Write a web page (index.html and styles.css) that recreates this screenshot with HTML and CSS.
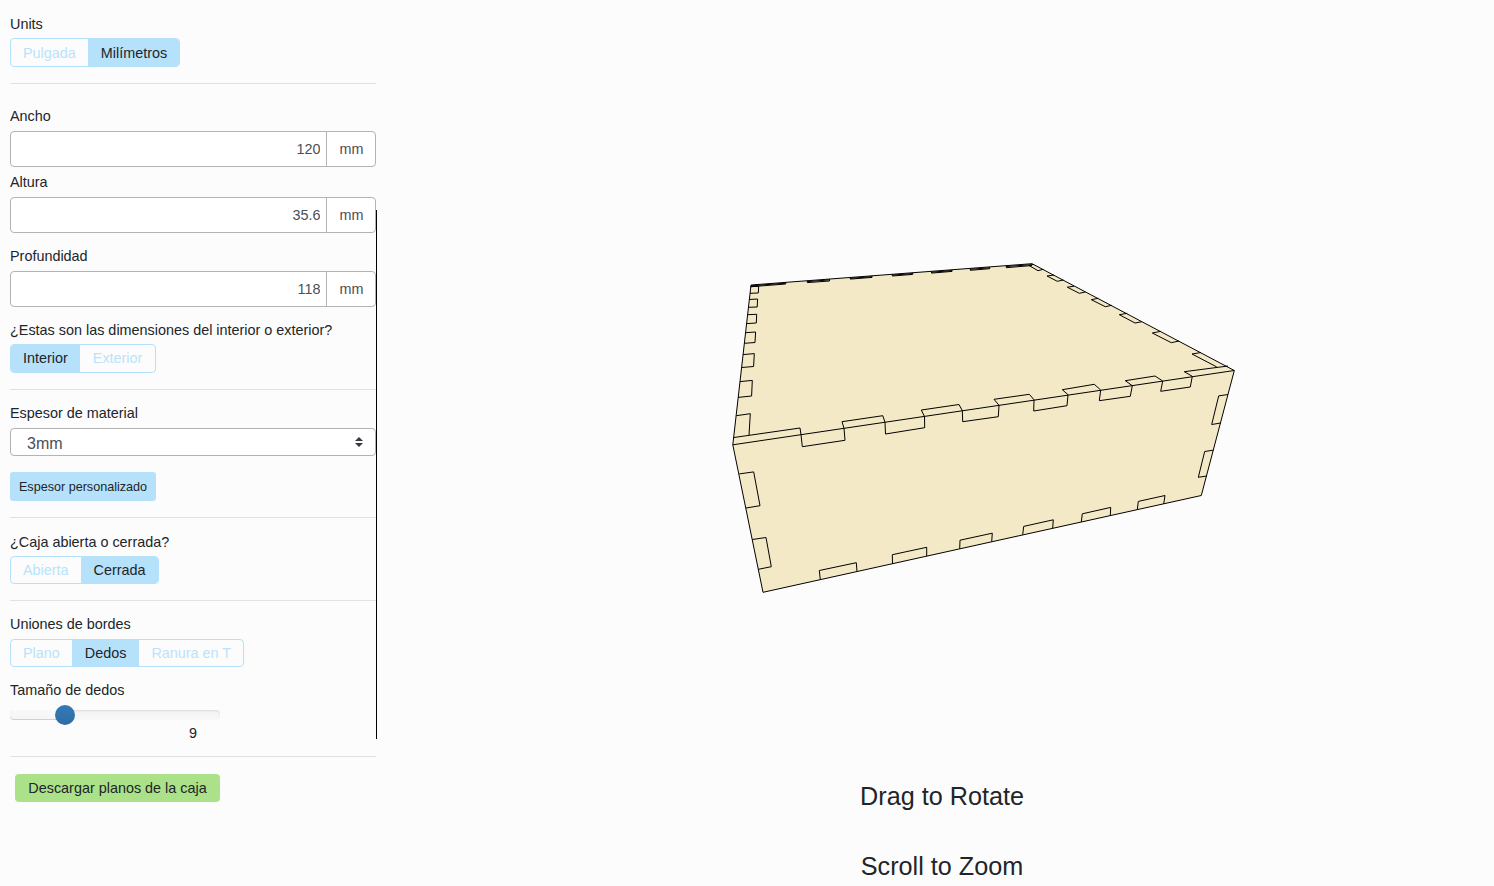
FILE: index.html
```html
<!DOCTYPE html>
<html lang="es">
<head>
<meta charset="utf-8">
<title>Caja</title>
<link rel="stylesheet" href="styles.css">
</head>
<body>
<form class="sidebar">
  <section class="group units">
    <label class="label">Units</label>
    <div class="toggle tall"><span class="option">Pulgada</span><span class="option active">Milímetros</span></div>
  </section>
  <section class="group dimensions">
    <label class="label">Ancho</label>
    <div class="field"><input class="value" value="120"><span class="unit">mm</span></div>
    <label class="label close">Altura</label>
    <div class="field"><input class="value" value="35.6"><span class="unit">mm</span></div>
    <label class="label spaced">Profundidad</label>
    <div class="field"><input class="value" value="118"><span class="unit">mm</span></div>
    <label class="label spaced question">¿Estas son las dimensiones del interior o exterior?</label>
    <div class="toggle tall"><span class="option active">Interior</span><span class="option">Exterior</span></div>
  </section>
  <section class="group material">
    <label class="label">Espesor de material</label>
    <div class="select"><span class="chosen">3mm</span>
      <svg class="caret" viewBox="0 0 8 10"><path d="M4 0 8 4H0zM4 10 0 6h8z"/></svg>
    </div>
    <button type="button" class="custom">Espesor personalizado</button>
  </section>
  <section class="group lid">
    <label class="label">¿Caja abierta o cerrada?</label>
    <div class="toggle"><span class="option">Abierta</span><span class="option active">Cerrada</span></div>
  </section>
  <section class="group joints">
    <label class="label">Uniones de bordes</label>
    <div class="toggle"><span class="option">Plano</span><span class="option active">Dedos</span><span class="option">Ranura en T</span></div>
    <label class="label fingers">Tamaño de dedos</label>
    <div class="slider"><div class="fill"></div><div class="thumb"></div></div>
    <output class="amount">9</output>
  </section>
  <button type="button" class="download">Descargar planos de la caja</button>
</form>
<main class="viewer">
  <svg class="scene" viewBox="377 210 1117 529">
    <path class="face" d="M751 285 1032 263.7 1234.3 370.5 1201.3 495.5 763 592.3 732.8 444.8z"/>
    <path class="edge" d="M732.8 444.8 1234.3 370.5"/>
    <!-- front finger joints -->
    <path class="edge" d="M733.3 437.6 800 428 801 434.7 802.3 446.7 845 440.3 844 428.3 842 421.7 882.8 415.7 885 422.3 885.5 434 924.7 427.7 924.5 416.5 921.3 410 959 404.5 962.3 410.7 962.7 421.7 998.3 416.7 999 405.3 994 399.3 1029.3 394.3 1034 399.7 1033.7 411 1067 405.7 1068 394.7 1062.3 389.7 1094.3 384.3 1100.7 390 1099.3 400.7 1130.3 396.3 1132.3 385.7 1125.3 380.7 1155 376 1162.7 381 1160.7 391.3 1190.3 387 1192.3 376.3 1184.3 371.7 1228 366"/>
    <!-- left joints of the lid -->
    <path class="edge" d="M750.5 286.7 758.7 286.2 758.3 293 750 293.3M749.3 299.5 757.6 299 757.2 307 748.5 307.3M747.5 314.7 756.7 314.3 756.3 323 746.8 323.6M745.5 332.7 755.6 332 755 342.5 744.4 343.3M743 354.6 754.3 353.6 753.6 366.5 741.6 367.5M740 381.6 752.3 380.4 751.6 396 738 397.4M736.3 415.7 750.3 413.7 749 435.3"/>
    <!-- rear joints -->
    <path class="edge" d="M751 286.7 785.7 284V282.4M807.3 280.8V282.6L829.5 281V279.1M850.3 277.5V279.1L872 277.4V275.9M892.3 274.4V276L912.7 274.4V272.8M931.5 271.4V273.1L952 271.4V269.8M970.3 268.5V270.3L989.7 268.7V267M1006.3 265.8V267.7L1032 265.5"/>
    <path class="edge" d="M751 285.8 785.7 283.2M807.3 281.6 829.5 279.9M850.3 278.3 872 276.7M892.3 275.1 912.7 273.6M931.5 272.2 952 270.6M970.3 269.3 989.7 267.8M1006.3 266.5 1034 264.5"/>
    <!-- right joints of the lid -->
    <path class="edge" d="M1216.7 366.9 1192 354 1201 352.5M1161 331.3 1152.3 333 1171.3 342.7 1179 341M1127.3 313.3 1119.3 314.7 1135 323 1142 321.7M1098.3 298.3 1091.3 299.7 1105.3 306.7 1111.7 305.3M1074 286.2 1067.3 287.2 1079.3 293.3 1085.3 292M1054 275 1047 276 1057.3 281.3 1063.3 280M1029 265.5 1038 270.7 1043.3 269.3"/>
    <!-- side joints of the front panel -->
    <path class="edge" d="M739.3 473.9 753.7 471.9 760 505.7 746 508M752.3 539.5 766 537.5 771.3 566.7 758.3 569.3M1228 394.5 1218.7 395.9 1211.7 424.5 1220.7 423M1213.3 450.2 1204.7 451.5 1198.3 477.3 1206.7 476"/>
    <!-- bottom joints -->
    <path class="edge" d="M820.3 579.7 819.3 570.5 856.3 562.7 857 571.5M892.5 564 892.3 554.7 926.7 547.3V556M959.7 548.7 960 540.2 992.3 533.2 991.7 541.7M1022.7 534.7 1023.7 526.4 1053.3 519.8 1052.7 528M1081.3 522 1082.3 513.8 1110.7 507.4 1110.3 515.7M1137.3 509.7 1138.3 501.4 1165 495.5 1163.7 504"/>
  </svg>
  <p class="hint">Drag to Rotate</p>
  <p class="hint">Scroll to Zoom</p>
</main>
</body>
</html>
```
FILE: styles.css
```css
* { box-sizing: border-box; }
body {
  margin: 0;
  height: 886px;
  display: flex;
  overflow: hidden;
  background: #fcfcfc;
  color: #212529;
  font: 14.4px/22px "Liberation Sans", Arial, sans-serif;
}
.sidebar { width: 376px; flex: none; padding: 13px 0 0 10px; }
.group { border-bottom: 1px solid #e1e1e1; }
.label { display: block; height: 22px; }
.units { height: 71px; }
.units .toggle { margin-top: 3px; }
.units .option { line-height: 28px; }
.dimensions { height: 306px; padding-top: 21px; }
.material { height: 128px; padding-top: 12px; }
.lid { height: 83px; padding-top: 13px; }
.joints { height: 156px; padding-top: 12px; }
.field {
  display: flex;
  height: 36px;
  margin-top: 4px;
  border: 1px solid #b3b3b3;
  border-radius: 4px;
  background: #fff;
  color: #495057;
}
.value {
  flex: 1;
  min-width: 0;
  padding: 0 5.6px 0 0;
  border: 0;
  background: transparent;
  text-align: right;
  font: inherit;
  color: inherit;
}
.unit { width: 49px; padding-left: 1px; border-left: 1px solid #b3b3b3; line-height: 34px; text-align: center; }
.close { margin-top: 4px; }
.spaced { margin-top: 12px; }
.question + .toggle { margin-top: 3px; }
.toggle {
  display: inline-flex;
  vertical-align: top;
  height: 28px;
  margin-top: 3px;
  border: 1px solid #b5e1fb;
  border-radius: 4px;
  overflow: hidden;
  color: #b9e3fb;
}
.tall { height: 29px; }
.option { padding: 0 12.2px 0 12px; line-height: 27px; white-space: nowrap; }
.option + .option { padding-left: 12.8px; }
.active { background: #b5e1fb; color: #212529; }
.select {
  display: flex;
  align-items: center;
  justify-content: space-between;
  height: 28px;
  margin-top: 4px;
  padding: 2px 12px 0 16px;
  border: 1px solid #b3b3b3;
  border-radius: 4px;
  background: #fff;
  color: #495057;
  font-size: 16px;
}
.chosen { padding-top: 2px; }
.caret { width: 8px; height: 10px; margin-top: -2px; fill: #343a40; }
.custom {
  display: block;
  width: 146px;
  height: 29px;
  margin-top: 16px;
  padding: 0;
  border: 0;
  border-radius: 3px;
  background: #b5e1fb;
  color: #212529;
  font: 12.6px "Liberation Sans", Arial, sans-serif;
}
.joints .toggle { margin-top: 4px; }
.fingers { margin-top: 12px; }
.slider {
  position: relative;
  width: 210px;
  height: 10px;
  margin-top: 9px;
  border-radius: 4px;
  background: linear-gradient(#f3f3f3, #f8f8f8);
  box-shadow: inset 0 1px 2px rgba(0, 0, 0, .1);
}
.fill {
  width: 55px;
  height: 10px;
  border-radius: 4px 0 0 4px;
  background: linear-gradient(#f9f9f9, #f5f5f5);
  box-shadow: inset 0 -1px 0 rgba(0, 0, 0, .15);
}
.thumb {
  position: absolute;
  left: 45px;
  top: -5px;
  width: 20px;
  height: 20px;
  border-radius: 50%;
  background: linear-gradient(#337ab7, #2e6da4);
}
.amount { display: block; width: 187px; margin-top: 2px; text-align: right; }
.download {
  display: block;
  width: 205px;
  height: 28px;
  margin: 17px 0 0 5px;
  padding: 0;
  border: 0;
  border-radius: 4px;
  background: #abe188;
  color: #212529;
  font: inherit;
}
.viewer { flex: 1; padding-top: 210px; }
.scene { display: block; width: 1118px; height: 529px; border-left: 1px solid #000; }
.face { fill: #f3e9c6; stroke: #000; stroke-width: 1; stroke-linejoin: round; }
.edge { fill: none; stroke: #000; stroke-width: 1; }
.hint { margin: 0 0 32px 14px; text-align: center; font-size: 25.2px; line-height: 38px; }
.scene + .hint { margin-top: 38px; }
```
